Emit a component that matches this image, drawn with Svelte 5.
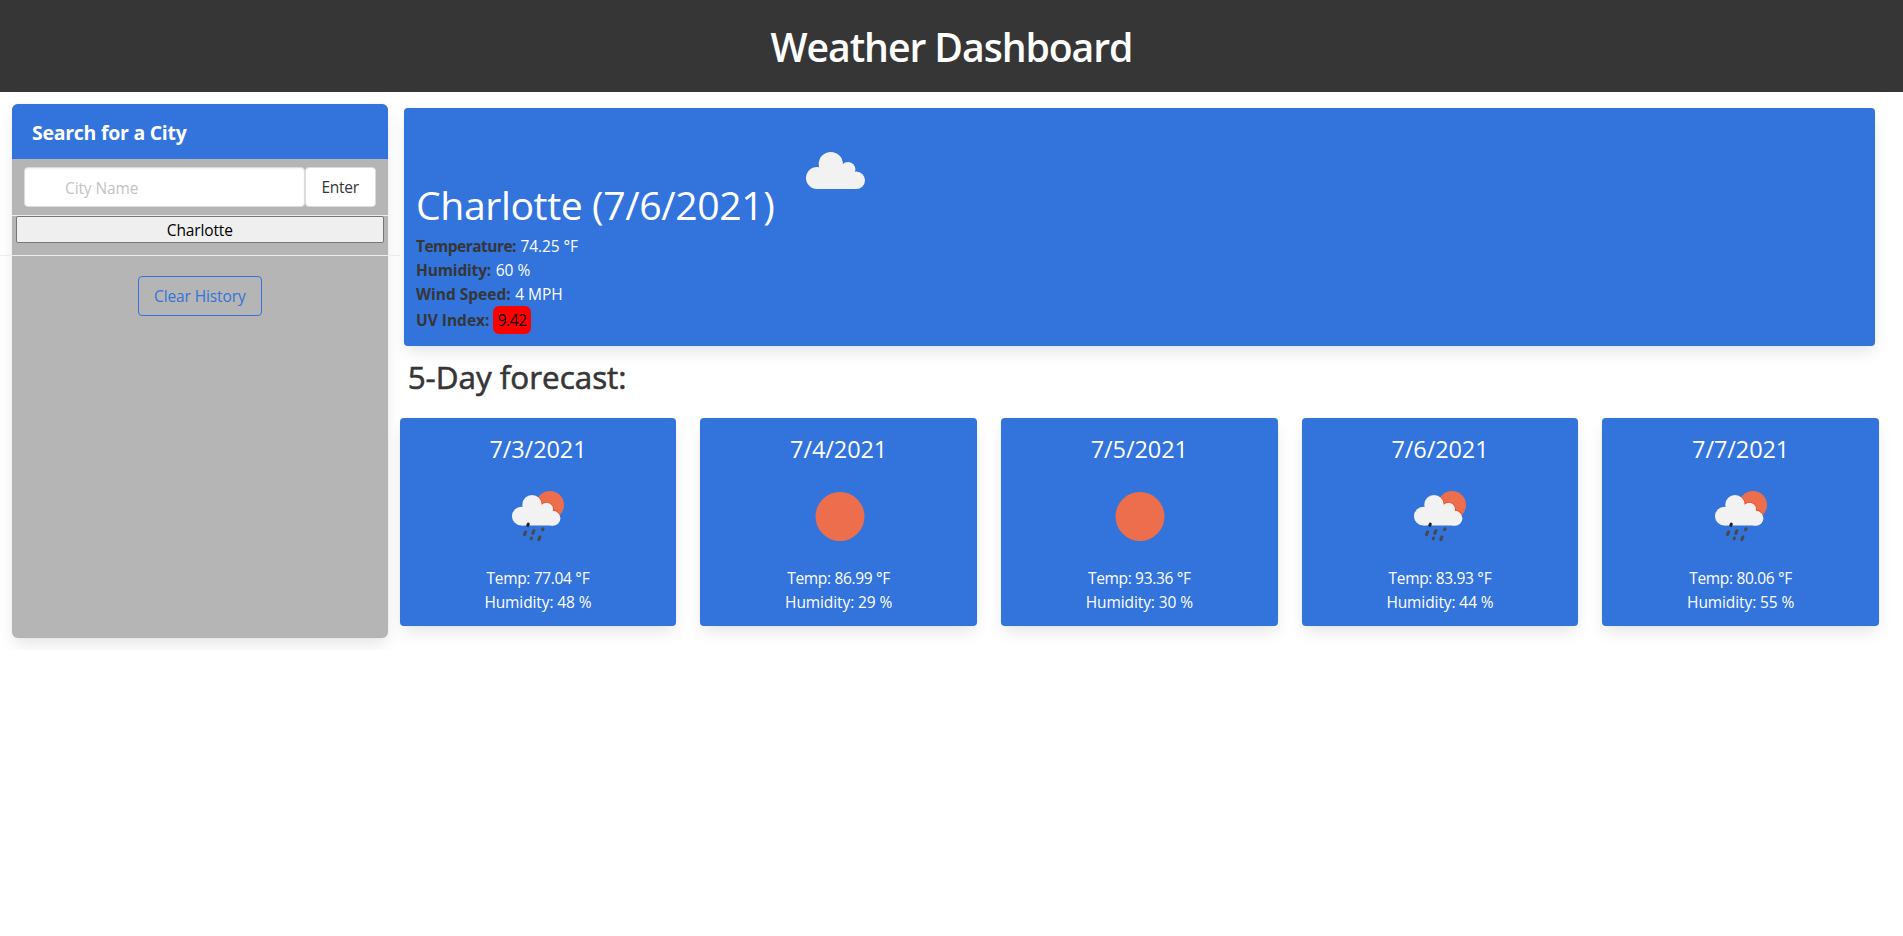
<script>
  const current = [
    { label: 'Temperature:', value: '74.25 °F', kind: 'temperature' },
    { label: 'Humidity:', value: '60 %', kind: 'humidity' },
    { label: 'Wind Speed:', value: '4 MPH', kind: 'wind' }
  ];
  const days = [
    { date: '7/3/2021', sky: 'rain', temp: '77.04', humidity: 48 },
    { date: '7/4/2021', sky: 'clear', temp: '86.99', humidity: 29 },
    { date: '7/5/2021', sky: 'clear', temp: '93.36', humidity: 30 },
    { date: '7/6/2021', sky: 'rain', temp: '83.93', humidity: 44 },
    { date: '7/7/2021', sky: 'rain', temp: '80.06', humidity: 55 }
  ];
</script>

{#snippet smallCloud()}
  <circle cx="33.400" cy="50.200" r="9.400" />
  <circle cx="44" cy="38.700" r="9.700" />
  <circle cx="58.500" cy="43.200" r="6.500" />
  <circle cx="64.900" cy="52.200" r="7.500" />
  <path d="M33.400 59.600V46L44 40L58 42L65 50V59.600Z" />
{/snippet}

<header class="hero"><h1>Weather Dashboard</h1></header>

<main class="layout">
  <aside class="sidebar">
    <section class="panel">
      <h2 class="panel-heading">Search for a City</h2>
      <div class="search">
        <input type="text" placeholder="City Name" aria-label="City Name" />
        <button class="enter">Enter</button>
      </div>
      <div class="history"><button class="city">Charlotte</button></div>
      <div class="clear-row"><button class="clear">Clear History</button></div>
    </section>
  </aside>

  <section class="content">
    <article class="current box">
      <div class="current-head">
        <h2>Charlotte (7/6/2021)</h2>
        <svg class="icon" viewBox="0 0 100 100" aria-hidden="true">
          <g class="cloud">
            <circle cx="31" cy="58" r="11" />
            <circle cx="44.800" cy="44.100" r="12.100" />
            <circle cx="61.900" cy="49.600" r="7.500" />
            <circle cx="70.300" cy="60.300" r="8.700" />
            <path d="M31 69V54L44 46L62 48L70.300 58V69Z" />
          </g>
        </svg>
      </div>
      {#each current as { label, value, kind }}
        <p class={kind}><strong>{label}</strong><span>{value}</span></p>
      {/each}
      <p class="uv-row"><strong>UV Index:</strong><span class="uv">9.42</span></p>
    </article>

    <h3 class="forecast-title">5-Day forecast:</h3>

    <div class="forecast">
      {#each days as day, i}
        <article class="day box">
          <h4>{day.date}</h4>
          <svg class="icon" viewBox="0 0 100 100" aria-hidden="true">
            {#if day.sky === 'clear'}
              <circle class="sun" cx="51" cy="50.500" r="24.500" />
            {:else}
              <clipPath id="sun-{i}"><circle cx="62" cy="39" r="14" /></clipPath>
              <circle class="sun" cx="62" cy="39" r="14" />
              <g class="rim" clip-path="url(#sun-{i})">{@render smallCloud()}</g>
              <g class="cloud">{@render smallCloud()}</g>
              <path class="drop first" d="M40.300 58.100l-.5 1.200" />
              <path class="drop" d="M37.600 66l-1.100 2.600M45.900 64.700l-1.100 2.600M55 62.800l-.4 1M43.500 72.100l-.3 .6M51.900 71l-1.100 2.600" />
            {/if}
          </svg>
          <p class="temp">Temp: {day.temp} °F</p>
          <p class="hum">Humidity: {day.humidity} %</p>
        </article>
      {/each}
    </div>
  </section>
</main>

<style>
  :global(body) {
    margin: 0;
    background: #fff;
    color: #363636;
    font: 400 16px/24px 'Open Sans', 'Noto Sans', sans-serif;
  }
  h1, h2, h3, h4, p { margin: 0; font-weight: 400; }
  input, button { box-sizing: border-box; margin: 0; font: inherit; letter-spacing: -.12px; }
  .hero { height: 92px; background: #363636; color: #fff; text-align: center; }
  .hero h1 { padding-top: 24px; font-size: 39.200px; line-height: 45px; font-weight: 600; letter-spacing: -1.080px; }
  .layout { display: flex; font-size: 15.500px; }
  .sidebar { flex: none; width: 399.630px; padding: 12px; box-sizing: border-box; }
  .panel { height: 534px; border-radius: 6px; background: #b5b5b5; box-shadow: 0 8px 16px -2px rgba(10,10,10,.1), 0 0 0 1px rgba(10,10,10,.02); }
  .panel-heading { height: 55px; padding: 0 20px; box-sizing: border-box; border-radius: 6px 6px 0 0; background: #3273dc; color: #fff; font-size: 19.500px; line-height: 57px; font-weight: 700; letter-spacing: -.27px; }
  .search { display: flex; height: 57px; padding: 8px 12px; box-sizing: border-box; border-bottom: 1px solid #ededed; }
  .search input { flex: 1; min-width: 0; height: 40px; padding: 2px 40px 0; border: 1px solid #dbdbdb; border-radius: 4px; background: #fff; box-shadow: inset 0 1px 2px rgba(10,10,10,.05); }
  .search input::placeholder { color: #c3c3c3; opacity: 1; }
  .enter { width: 71px; height: 40px; padding: 0; border: 1px solid #dbdbdb; border-radius: 4px; background: #fff; color: #363636; letter-spacing: -.3px; }
  .history { height: 40px; margin: 0 -12px; padding: 0 16px; box-sizing: border-box; border-bottom: 1px solid #ededed; }
  .city { display: block; width: 100%; height: 27px; padding: 0; border: 1px solid #767676; border-radius: 2px; background: #efefef; color: #000; }
  .clear-row { display: flex; justify-content: center; padding-top: 20px; }
  .clear { width: 124px; height: 40px; padding: 0; border: 1px solid #3273dc; border-radius: 4px; background: transparent; color: #3273dc; }
  .content { flex: none; width: 1479.370px; }
  .box { box-sizing: border-box; border-radius: 4px; background: #3273dc; color: #fff; box-shadow: 0 8px 16px -2px rgba(10,10,10,.1), 0 0 0 1px rgba(10,10,10,.02); }
  .current { height: 238px; margin: 16px 4px 0; padding: 12px 12.370px; }
  .current-head { display: flex; height: 114px; }
  .current-head h2 { width: 370px; padding-top: 56px; font-size: 39.200px; line-height: 57px; letter-spacing: -.4px; white-space: nowrap; }
  .icon { display: block; width: 100px; height: 100px; flex: none; }
  .cloud { fill: #f2f2f2; }
  .rim { fill: none; stroke: #ed4b2a; stroke-width: 1.600; }
  .sun { fill: #ec6e4c; }
  .drop { fill: none; stroke: #484848; stroke-width: 3; stroke-linecap: round; }
  .first { stroke: #222; }
  strong { margin-right: 4.500px; color: #363636; font-weight: 700; }
  .temperature strong { letter-spacing: -.52px; }
  .temperature span { letter-spacing: -.1px; }
  .humidity strong { letter-spacing: -.15px; }
  .uv-row { display: flex; align-items: center; height: 28px; }
  .uv-row strong { margin-right: 3.700px; }
  .uv { width: 38px; padding: 2px 0; border-radius: 6px; background: #f00; color: #000; text-align: center; letter-spacing: -.4px; }
  .forecast-title { padding: 11px 0 0 8px; height: 61px; margin-bottom: 0; font-size: 31.400px; line-height: 40px; box-sizing: content-box; -webkit-text-stroke: .6px #363636; }
  .forecast { display: grid; grid-template-columns: repeat(5, 1fr); gap: 24px; }
  .day { height: 208px; padding-top: 12px; text-align: center; }
  .day h4 { height: 36px; font-size: 23.500px; line-height: 38px; letter-spacing: -.1px; }
  .day .icon { margin: 0 auto; }
  .temp { letter-spacing: -.33px; }
  .hum { letter-spacing: -.1px; }
</style>
